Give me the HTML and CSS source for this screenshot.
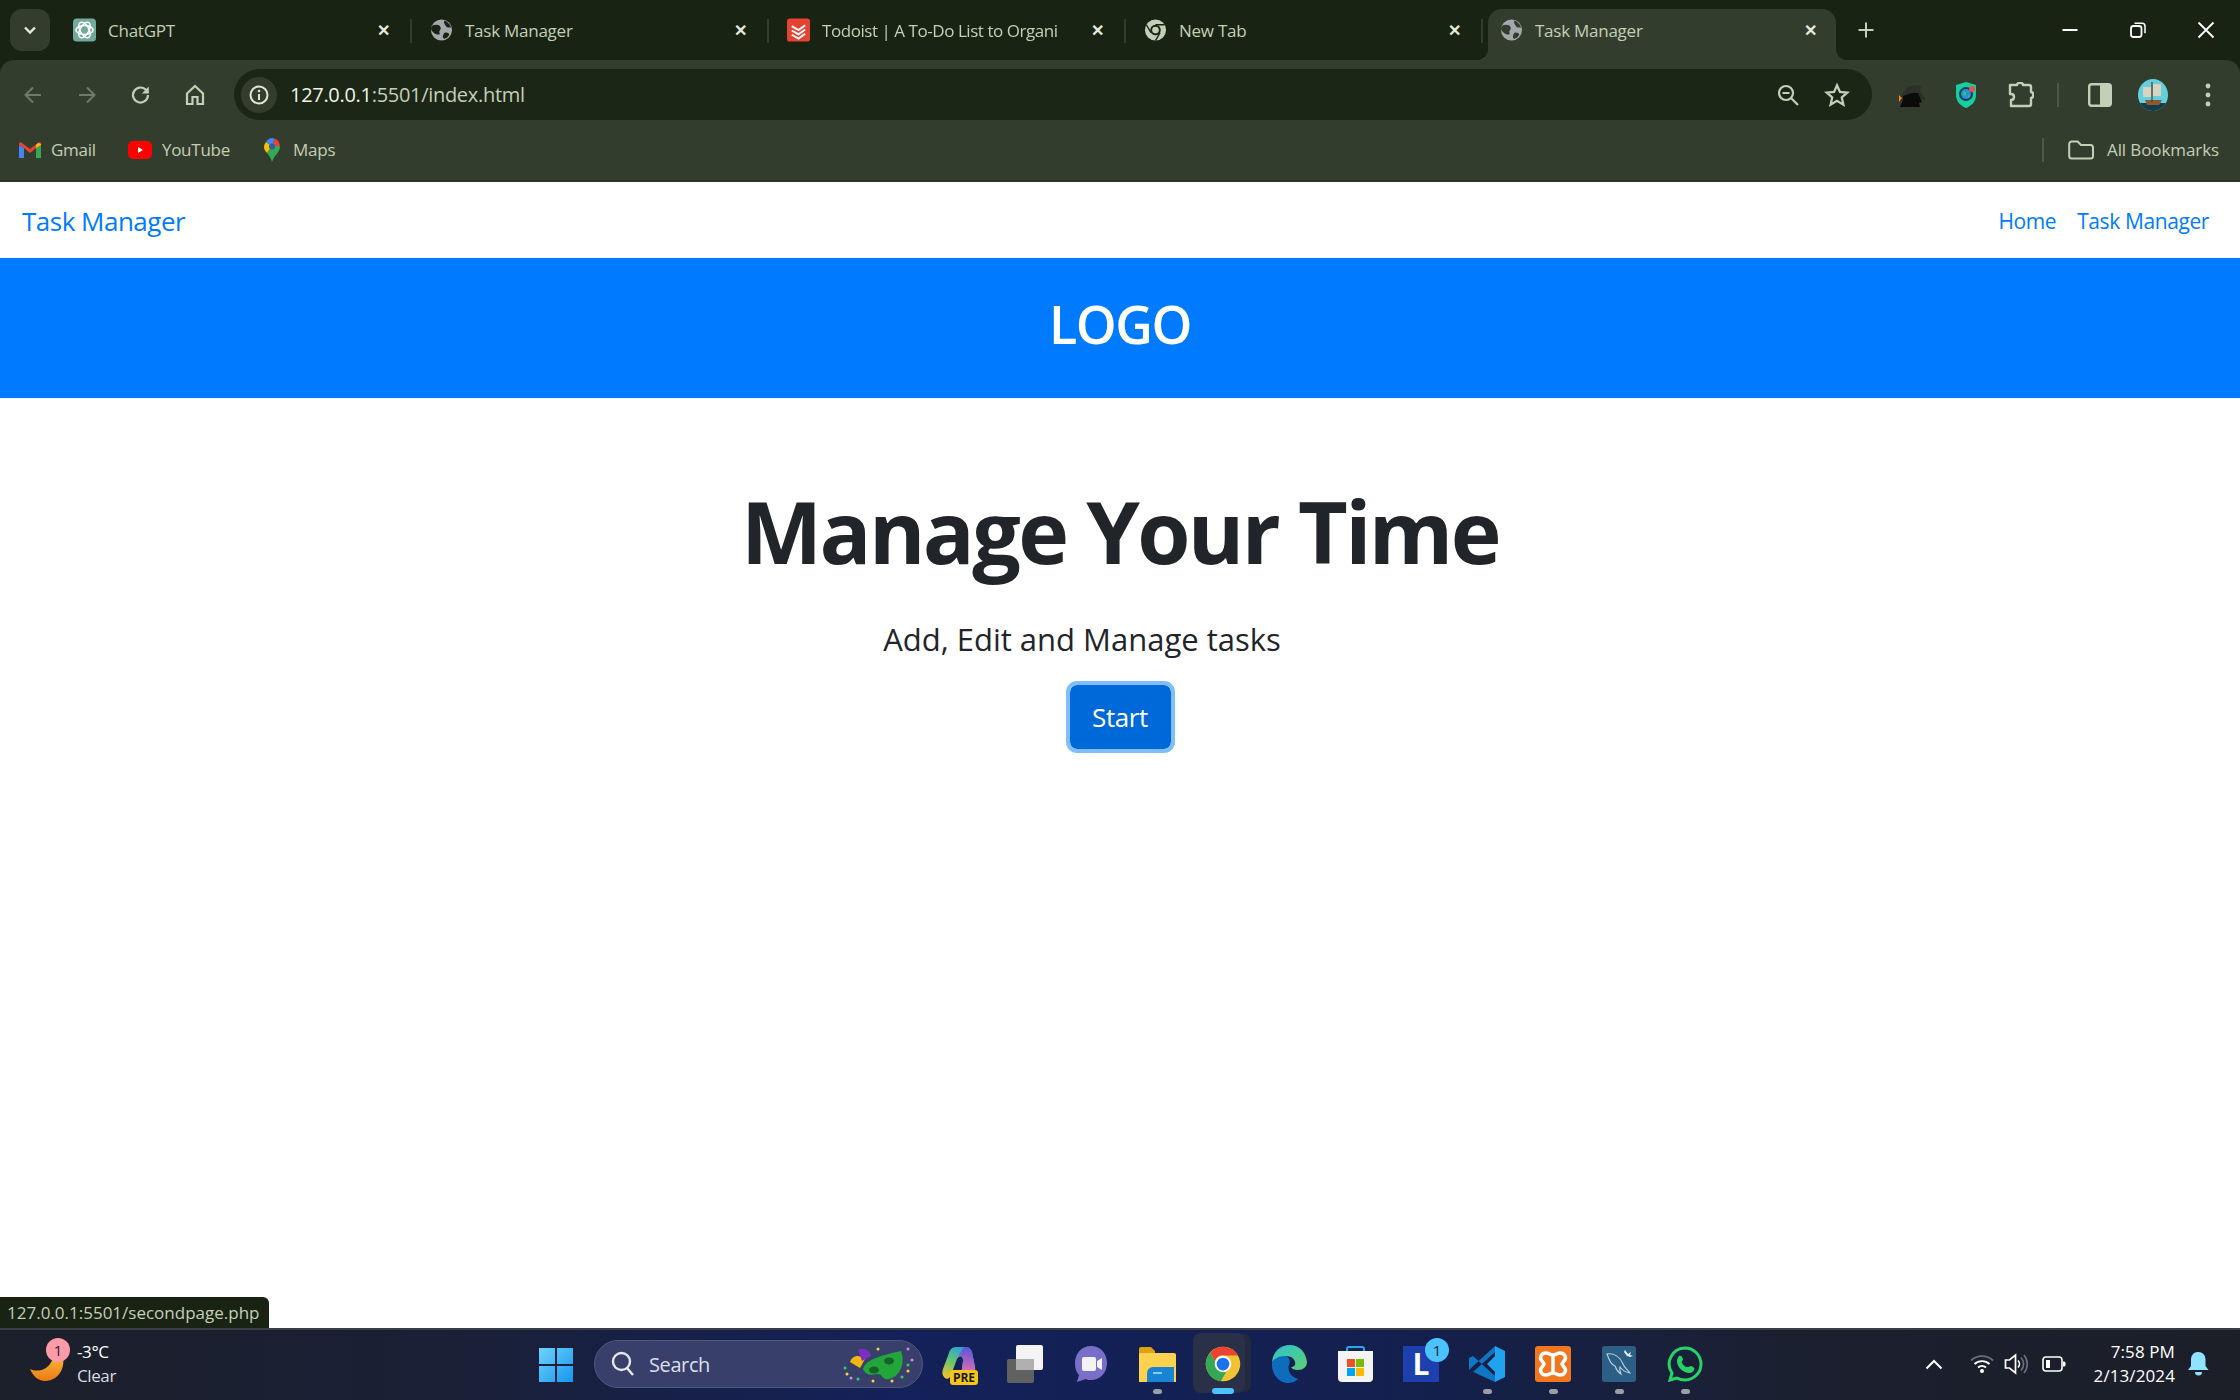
FILE: index.html
```html
<!DOCTYPE html>
<html lang="en">
<head>
    <meta charset="UTF-8">
    <title>Task Manager</title>
    <link rel="stylesheet" href="styles.css">
</head>
<body>
    <div class="browser">
        <div class="tabstrip">
            <div class="tab-search">
                <svg width="16" height="16" viewBox="0 0 16 16"><path d="M3 5.500l5 5 5-5" fill="none" stroke="#e4ead9" stroke-width="2.400"/></svg>
            </div>
            <div class="tab">
                <svg class="favicon" viewBox="0 0 24 24"><rect width="24" height="24" rx="4" fill="#74aa9c"/><g fill="none" stroke="#fff" stroke-width="1.500"><ellipse cx="12" cy="12" rx="9" ry="4.600"/><ellipse cx="12" cy="12" rx="9" ry="4.600" transform="rotate(60 12 12)"/><ellipse cx="12" cy="12" rx="9" ry="4.600" transform="rotate(120 12 12)"/></g></svg>
                <span class="tab-title">ChatGPT</span>
                <span class="tab-close">&#10005;</span>
            </div>
            <div class="tab">
                <svg class="favicon" viewBox="0 0 24 24"><circle cx="12" cy="12" r="11" fill="#a3a8ad"/><path d="M3 7c3-1 7-1 8 2s-2 3-1 6-4 2-7-1-2-5 0-7zM15 2c3 1 6 4 7 7-3 1-5 0-6-2s-2-3-1-5zM15 15c2-1 5 0 5 2-1 2-3 4-5 4s-2-4 0-6z" fill="#192314"/></svg>
                <span class="tab-title">Task Manager</span>
                <span class="tab-close">&#10005;</span>
            </div>
            <div class="tab">
                <svg class="favicon" viewBox="0 0 24 24"><rect width="24" height="24" rx="3" fill="#e44332"/><path d="M5 8l7 4 7-5M5 12.500l7 4 7-5M5 17l7 4 7-5" fill="none" stroke="#fff" stroke-width="2"/></svg>
                <span class="tab-title tab-title-fade">Todoist | A To-Do List to Organi</span>
                <span class="tab-close">&#10005;</span>
            </div>
            <div class="tab">
                <svg class="favicon" viewBox="0 0 24 24"><circle cx="12" cy="12" r="11" fill="#c3cfb6"/><circle cx="12" cy="12" r="5.500" fill="#192314"/><circle cx="12" cy="12" r="3.500" fill="#c3cfb6"/><path d="M12 6.500h9.500M7.200 14.700L2.500 6.500M16.800 14.700L12 23" stroke="#192314" stroke-width="1.400"/></svg>
                <span class="tab-title">New Tab</span>
                <span class="tab-close">&#10005;</span>
            </div>
            <div class="tab tab-active">
                <svg class="favicon" viewBox="0 0 24 24"><circle cx="12" cy="12" r="11" fill="#a3a8ad"/><path d="M3 7c3-1 7-1 8 2s-2 3-1 6-4 2-7-1-2-5 0-7zM15 2c3 1 6 4 7 7-3 1-5 0-6-2s-2-3-1-5zM15 15c2-1 5 0 5 2-1 2-3 4-5 4s-2-4 0-6z" fill="#333d2d"/></svg>
                <span class="tab-title">Task Manager</span>
                <span class="tab-close">&#10005;</span>
            </div>
            <div class="new-tab">
                <svg width="18" height="18" viewBox="0 0 18 18"><path d="M9 1.500v15M1.500 9h15" stroke="#c3cfb6" stroke-width="2"/></svg>
            </div>
            <div class="window-controls">
                <svg width="18" height="18" viewBox="0 0 18 18"><path d="M1.500 9h15" stroke="#fff" stroke-width="2"/></svg>
                <svg width="18" height="18" viewBox="0 0 18 18"><rect x="2" y="5" width="10.500" height="11" rx="2.500" fill="none" stroke="#fff" stroke-width="1.800"/><path d="M5.500 2.200h7.500a3 3 0 0 1 3 3v7" fill="none" stroke="#fff" stroke-width="1.500"/></svg>
                <svg width="18" height="18" viewBox="0 0 18 18"><path d="M1.500 1.500l15 15M16.500 1.500l-15 15" stroke="#fff" stroke-width="1.800"/></svg>
            </div>
        </div>

        <div class="toolbar-area">
            <div class="toolbar">
                <div class="nav-btn">
                    <svg width="22" height="22" viewBox="0 0 22 22"><path d="M19 11H4M11 3.500L3.500 11l7.500 7.500" fill="none" stroke="#6f7a68" stroke-width="2"/></svg>
                </div>
                <div class="nav-btn">
                    <svg width="22" height="22" viewBox="0 0 22 22"><path d="M3 11h15M11 3.500l7.500 7.500-7.500 7.500" fill="none" stroke="#6f7a68" stroke-width="2"/></svg>
                </div>
                <div class="nav-btn">
                    <svg width="22" height="22" viewBox="0 0 22 22"><path d="M18 11a7.500 7.500 0 1 1-2.300-5.400L18 8" fill="none" stroke="#c3cfb6" stroke-width="2.200"/><path d="M18.800 2.500v7h-7z" fill="#c3cfb6"/></svg>
                </div>
                <div class="nav-btn">
                    <svg width="22" height="24" viewBox="0 0 22 24"><path d="M3 10.500L11 3l8 7.500V21h-5.500v-7h-5v7H3z" fill="none" stroke="#c3cfb6" stroke-width="2.200"/></svg>
                </div>
                <div class="omnibox">
                    <div class="site-info">
                        <svg width="22" height="22" viewBox="0 0 22 22"><circle cx="11" cy="11" r="8.500" fill="none" stroke="#dfe6d4" stroke-width="2"/><path d="M11 10v6" stroke="#dfe6d4" stroke-width="2"/><circle cx="11" cy="7" r="1.300" fill="#dfe6d4"/></svg>
                    </div>
                    <span class="url">127.0.0.1<span class="url-rest">:5501/index.html</span></span>
                    <svg class="omni-zoom" width="24" height="24" viewBox="0 0 24 24"><circle cx="10" cy="10" r="7" fill="none" stroke="#c3cfb6" stroke-width="2.200"/><path d="M6.500 10h7M15 15l7 7" stroke="#c3cfb6" stroke-width="2.200"/></svg>
                    <svg class="omni-star" width="26" height="26" viewBox="0 0 24 24"><path d="M12 3l2.700 6.200 6.800.6-5.100 4.500 1.500 6.600L12 17.400 6.100 20.900l1.500-6.600L2.500 9.800l6.800-.6z" fill="none" stroke="#c3cfb6" stroke-width="2.100"/></svg>
                </div>
                <div class="toolbar-right">
                    <div class="tool ext-one">
                        <svg width="30" height="26" viewBox="0 0 30 26"><path d="M1 20l4-9 5-6 6-2 7 1-1 5 3 4 3 6-7-3H8z" fill="#2d2f2a"/><path d="M5 14l9-3 6 0 4 9-3 1 1 4H2l3-7z" fill="#0b0b0b"/><path d="M1 13l3 3-3 4z" fill="#f08a0c"/></svg>
                    </div>
                    <div class="tool ext-two">
                        <svg width="22" height="28" viewBox="0 0 22 28"><path d="M11 1l10 3v10c0 7-5 11-10 13C6 25 1 21 1 14V4z" fill="#15cf9c"/><circle cx="11" cy="13" r="7" fill="#123a5e"/><circle cx="11" cy="13" r="5" fill="#2b8fe0"/><path d="M8 11c2-1 3 0 3 2s-2 2-3 0zM13 14l2 1-2 2z" fill="#2ecf4a"/><circle cx="17" cy="8" r="3" fill="#f05050"/></svg>
                    </div>
                    <div class="tool ext-puzzle">
                        <svg width="26" height="26" viewBox="0 0 26 26"><path d="M2 3h7c0-3 6-3 6 0h6a2 2 0 0 1 2 2v5c3 0 3 6 0 6v6a2 2 0 0 1-2 2H3v-6c4 0 4-6 0-6H2z" fill="none" stroke="#c3cfb6" stroke-width="2.400" stroke-linejoin="round"/></svg>
                    </div>
                    <span class="tool-sep"></span>
                    <div class="tool side-panel">
                        <svg width="24" height="24" viewBox="0 0 24 24"><rect x="1.200" y="1.200" width="21.600" height="21.600" rx="2.500" fill="none" stroke="#c3cfb6" stroke-width="2.400"/><rect x="12" y="1" width="11" height="22" rx="2" fill="#c3cfb6"/></svg>
                    </div>
                    <div class="tool avatar">
                        <svg width="30" height="32" viewBox="0 0 30 32"><defs><clipPath id="avatarClip"><ellipse cx="15" cy="16" rx="15" ry="16"/></clipPath></defs><g clip-path="url(#avatarClip)"><rect width="30" height="32" fill="#63d0de"/><rect y="24" width="30" height="8" fill="#143c4c"/><path d="M7 21h17l-3 5H9z" fill="#8a5a33"/><path d="M5 8h8v10H5zM15 5h8v12h-8z" fill="#d8d2c0"/><path d="M14 3v20" stroke="#5a3a20" stroke-width="1.200"/></g></svg>
                    </div>
                    <div class="tool kebab">
                        <svg width="6" height="24" viewBox="0 0 6 24"><circle cx="3" cy="3" r="2.400" fill="#c3cfb6"/><circle cx="3" cy="12" r="2.400" fill="#c3cfb6"/><circle cx="3" cy="21" r="2.400" fill="#c3cfb6"/></svg>
                    </div>
                </div>
            </div>

            <div class="bookmarks">
                <div class="bookmark bookmark-gmail">
                    <svg width="22" height="16" viewBox="0 0 22 16"><path d="M0 3v13h5V6z" fill="#4285f4"/><path d="M17 6v10h5V3z" fill="#34a853"/><path d="M0 3l5 3 6 5 6-5 5-3V2c0-2-2-2-3-1l-8 6-8-6C2 0 0 0 0 2z" fill="#ea4335"/><path d="M19 1l3 1v1l-5 3V3z" fill="#fbbc04"/></svg>
                    <span>Gmail</span>
                </div>
                <div class="bookmark bookmark-youtube">
                    <svg width="24" height="18" viewBox="0 0 24 18"><rect width="24" height="18" rx="5" fill="#f00"/><path d="M10 6l5 3-5 3z" fill="#fff"/></svg>
                    <span>YouTube</span>
                </div>
                <div class="bookmark bookmark-maps">
                    <svg width="18" height="24" viewBox="0 0 18 24"><path d="M9 24c-1-4-3-6-5-9L12 5l5 4c0 3-2 5-4 8-2 2-3 4-4 7z" fill="#34a853"/><path d="M4 15C2 13 1 11 1 9c0-2 1-4 2-5l6 4z" fill="#fbbc04"/><path d="M3 4c1.500-2.500 4-4 6-4 1 0 2 .2 3 .7L9 8z" fill="#4285f4"/><path d="M12 .700c3 1 5 4.300 5 8.300l-5-2-3 1z" fill="#ea4335"/><circle cx="9" cy="8.500" r="3" fill="#2f5aa8"/></svg>
                    <span>Maps</span>
                </div>
                <div class="all-bookmarks">
                    <span class="bookmarks-sep"></span>
                    <svg width="26" height="20" viewBox="0 0 26 20"><path d="M1.200 4a2.500 2.500 0 0 1 2.500-2.500h6L13 5h9.500a2.500 2.500 0 0 1 2.500 2.500v8.500a2.500 2.500 0 0 1-2.500 2.500H3.700A2.500 2.500 0 0 1 1.200 16z" fill="none" stroke="#c3cfb6" stroke-width="2"/></svg>
                    <span>All Bookmarks</span>
                </div>
            </div>
        </div>
    </div>

    <div class="page">
        <nav class="navbar">
            <a class="brand" href="#">Task Manager</a>
            <div class="nav-links">
                <a href="#">Home</a>
                <a href="#">Task Manager</a>
            </div>
        </nav>
        <header class="logo-bar">LOGO</header>
        <main class="hero">
            <h1>Manage Your Time</h1>
            <p>Add, Edit and Manage tasks</p>
            <button class="start-btn">Start</button>
        </main>
        <div class="status-bubble">127.0.0.1:5501/secondpage.php</div>
    </div>

    <div class="taskbar">
        <div class="weather">
            <div class="weather-icon">
                <svg width="36" height="32" viewBox="0 0 36 32"><defs><linearGradient id="moonGrad" x1="0" y1="0" x2="0" y2="1"><stop offset="0" stop-color="#f7c244"/><stop offset="1" stop-color="#ee7a12"/></linearGradient></defs><path d="M0 19C4 21 10 21 14 19C18 17 21 14 23 8L31 2C34 8 34 14 32 19C29 27 22 31 15 31C8 31 3 26 0 19z" fill="url(#moonGrad)"/></svg>
                <span class="weather-badge">1</span>
            </div>
            <div class="weather-text">
                <span>-3°C</span>
                <span class="weather-sub">Clear</span>
            </div>
        </div>

        <div class="slot">
            <svg width="34" height="35" viewBox="0 0 34 35"><defs><linearGradient id="winGrad" x1="0" y1="0" x2="1" y2="1"><stop offset="0" stop-color="#6fd3fb"/><stop offset="1" stop-color="#1596ee"/></linearGradient></defs><path d="M0 1h16v16H0zM18 1h16v16H18zM0 19h16v16H0zM18 19h16v16H18z" fill="url(#winGrad)"/></svg>
        </div>

        <div class="search-box">
            <svg width="24" height="26" viewBox="0 0 24 26"><circle cx="10.500" cy="10.500" r="8.500" fill="none" stroke="#e6e8ef" stroke-width="2.400"/><path d="M16 17l6 7" stroke="#e6e8ef" stroke-width="2.400"/></svg>
            <span class="search-label">Search</span>
            <svg class="search-mask" width="72" height="40" viewBox="0 0 72 40"><path d="M8 18c2-7 10-8 15-3l-5 9z" fill="#f5b70f"/><path d="M16 6c5-3 11-1 13 6l-9 5z" fill="#7b2fc0"/><g transform="translate(5 0)"><path d="M16 25c3-9 15-13 38-18 4 10 1 25-12 28-6 2-7-6-12-5-5 1-11 2-14-5z" fill="#22a63a"/><ellipse cx="42" cy="17" rx="5" ry="3.500" fill="#16602a"/><ellipse cx="27" cy="26" rx="5" ry="3.500" fill="#16602a"/></g><g fill="#c98de8"><circle cx="66" cy="5" r="1.500"/><circle cx="70" cy="16" r="1.500"/><circle cx="9" cy="34" r="1.500"/></g><g fill="#f5d33a"><circle cx="36" cy="5" r="1.500"/><circle cx="5" cy="30" r="1.500"/><circle cx="50" cy="37" r="1.500"/><circle cx="66" cy="27" r="1.500"/><circle cx="31" cy="37" r="1.500"/></g><g fill="#35d05a"><circle cx="3" cy="24" r="1.500"/><circle cx="66" cy="21" r="1.500"/><circle cx="16" cy="35" r="1.500"/><circle cx="60" cy="33" r="1.500"/></g></svg>
        </div>

        <div class="slots">
            <div class="slot">
                <svg width="34" height="34" viewBox="0 0 34 34"><defs><linearGradient id="copilotLeft" x1="0.700" y1="0" x2="0.200" y2="1"><stop offset="0" stop-color="#1f9fe8"/><stop offset=".55" stop-color="#6cc66a"/><stop offset="1" stop-color="#f2c230"/></linearGradient><linearGradient id="copilotRight" x1="0.500" y1="0" x2="0.500" y2="1"><stop offset="0" stop-color="#5a55d8"/><stop offset="1" stop-color="#ee6fb0"/></linearGradient></defs><path d="M24 0c3 0 5 2 6 5l3 15c1 6-3 9-7 9h-7l2-15c.5-5-4-6-6-2L9 28c-1 4-5 5-7 2-2-2-2-5-1-8L7 6c1-4 4-6 7-6z" fill="url(#copilotLeft)"/><path d="M24 0c3 0 5 2 6 5l3 15c1 6-3 9-7 9h-7l2-15c.5-4-2-6-5-5 3-3 4-9 8-9z" fill="url(#copilotRight)"/></svg>
                <span class="pre-badge">PRE</span>
            </div>
            <div class="slot">
                <svg width="36" height="38" viewBox="0 0 36 38"><rect x="0" y="14" width="27" height="24" rx="2" fill="#616161"/><rect x="9" y="0" width="27" height="25" rx="2" fill="#f4f4f4"/><rect x="9" y="14" width="18" height="11" fill="#b0b0b0"/></svg>
            </div>
            <div class="slot">
                <svg width="34" height="36" viewBox="0 0 34 36"><path d="M17 0c9 0 16 7 16 17s-7 17-16 17c-2 0-4 0-5-1l-9 3 2-7C2 26 1 22 1 17 1 7 8 0 17 0z" fill="#7a6fc8"/><rect x="8" y="11" width="14" height="14" rx="2" fill="#f2f2fa"/><path d="M23 15l5-3v12l-5-3z" fill="#f2f2fa"/></svg>
            </div>
            <div class="slot">
                <svg width="37" height="35" viewBox="0 0 37 35"><path d="M0 2a2 2 0 0 1 2-2h10l4 4v6H0z" fill="#e0a211"/><path d="M0 6h35a2 2 0 0 1 2 2v27H0z" fill="#fcd24f"/><path d="M14 20h21v15H8V26a6 6 0 0 1 6-6z" fill="#1a84d4"/><path d="M14 26h9" stroke="#7fd0f7" stroke-width="2"/></svg>
                <span class="task-dot"></span>
            </div>
            <div class="slot slot-active">
                <svg width="36" height="36" viewBox="0 0 48 48"><circle cx="24" cy="24" r="23" fill="#f1c232"/><path d="M24 1a23 23 0 0 1 20 11.500H24a11.500 11.500 0 0 0-10.800 7.500L7 9A23 23 0 0 1 24 1z" fill="#ea4335"/><path d="M7 9l10 17.500A11.500 11.500 0 0 0 28 35L21 47A23 23 0 0 1 7 9z" fill="#34a853"/><circle cx="24" cy="24" r="11" fill="#fff"/><circle cx="24" cy="24" r="8.500" fill="#1a73e8"/></svg>
                <span class="task-bar"></span>
            </div>
            <div class="slot">
                <svg width="36" height="38" viewBox="0 0 36 38"><defs><linearGradient id="edgeGrad" x1="0" y1="0" x2="1" y2="1"><stop offset="0" stop-color="#2bc3d2"/><stop offset="1" stop-color="#5ecf6e"/></linearGradient></defs><path d="M1 17C2 7 9 0 19 0c9 0 16 7 17 17 0 5-4 8-9 8-4 0-6-1-7-3 3 0 5-2 4-5-1-5-7-7-12-5-5 1-9 3-11 5z" fill="url(#edgeGrad)"/><path d="M1 17c2-3 7-6 12-6s7 4 5 9c-2 6 2 12 9 14-3 3-7 4-10 4C8 38 0 29 1 17z" fill="#0f6cbd"/></svg>
            </div>
            <div class="slot">
                <svg width="35" height="36" viewBox="0 0 35 36"><path d="M9 6V3a2 2 0 0 1 2-2h13a2 2 0 0 1 2 2v3" fill="none" stroke="#28a8e8" stroke-width="2"/><path d="M0 5h35v27a4 4 0 0 1-4 4H4a4 4 0 0 1-4-4z" fill="#f4f4f4"/><rect x="9" y="13" width="8" height="8" fill="#f25022"/><rect x="18" y="13" width="8" height="8" fill="#7fba00"/><rect x="9" y="22" width="8" height="8" fill="#00a4ef"/><rect x="18" y="22" width="8" height="8" fill="#ffb900"/></svg>
            </div>
            <div class="slot">
                <span class="app-l">L</span>
                <span class="app-badge">1</span>
            </div>
            <div class="slot">
                <svg width="36" height="36" viewBox="0 0 36 36"><path d="M0 12l4-2 22 20v6L0 24zM0 24l4 2L26 6V0z" fill="#0e76c4"/><path d="M26 0l10 5v26l-10 5z M26 10l-8 8 8 8z" fill="#21a2ee" fill-rule="evenodd"/></svg>
                <span class="task-dot"></span>
            </div>
            <div class="slot">
                <svg width="36" height="36" viewBox="0 0 36 36"><rect width="36" height="36" rx="3" fill="#f0761f"/><path d="M11 7C14 7 15 9 18 9C21 9 22 7 25 7C30 7 32 12 29 15C28 16.500 27 17 27 18C27 19 28 19.500 29 21C32 24 30 29 25 29C22 29 21 27 18 27C15 27 14 29 11 29C6 29 4 24 7 21C8 19.500 9 19 9 18C9 17 8 16.500 7 15C4 12 6 7 11 7zM18 9V27" fill="none" stroke="#fff" stroke-width="3.500"/></svg>
                <span class="task-dot"></span>
            </div>
            <div class="slot">
                <svg width="34" height="36" viewBox="0 0 34 36"><rect width="34" height="36" rx="3" fill="#2c5f86"/><path d="M5 8c7-1 13 3 16 10 1 3 4 5 7 9-5-1-8-3-10-6-1 3 0 5 1 7-3-2-5-5-6-8-3-1-6-6-8-12z" fill="none" stroke="#bcd2e0" stroke-width="1.100"/><path d="M23 4l3 4 3-2-1 3 3 1-3 1-3-1-3-4z" fill="#e4edf3"/></svg>
                <span class="task-dot"></span>
            </div>
            <div class="slot">
                <svg width="36" height="36" viewBox="0 0 36 36"><path d="M18 2a16 16 0 0 1 0 32c-3 0-6-.8-8-2l-7 2 2-7a16 16 0 0 1 13-25z" fill="none" stroke="#25d366" stroke-width="3"/><path d="M12 10c2-1 3 0 4 3 0 2-2 2-1 4 1 2 3 4 5 4 2 1 2-1 4-1 3 1 4 2 3 4-1 3-5 4-9 2-5-2-8-7-8-11 0-2 1-4 2-5z" fill="#25d366"/></svg>
                <span class="task-dot"></span>
            </div>
        </div>

        <div class="tray">
            <div class="tray-chevron">
                <svg width="18" height="11" viewBox="0 0 18 11"><path d="M1.500 9.500L9 2l7.500 7.500" fill="none" stroke="#fff" stroke-width="2"/></svg>
            </div>
            <div class="tray-item">
                <svg width="24" height="20" viewBox="0 0 24 20"><path d="M1 6.500a16 16 0 0 1 22 0" fill="none" stroke="#6b7078" stroke-width="1.800"/><path d="M4.500 10a11 11 0 0 1 15 0M8 13.500a6 6 0 0 1 8 0" fill="none" stroke="#fff" stroke-width="1.800"/><circle cx="12" cy="17" r="2" fill="#fff"/></svg>
            </div>
            <div class="tray-item">
                <svg width="24" height="24" viewBox="0 0 24 24"><path d="M1.500 8h4l6-5v18l-6-5h-4z" fill="none" stroke="#fff" stroke-width="1.700"/><path d="M14 8.500a5 5 0 0 1 0 7" fill="none" stroke="#fff" stroke-width="1.700"/><path d="M17 5.500a9.500 9.500 0 0 1 0 13M20 3a14 14 0 0 1 0 18" fill="none" stroke="#6b7078" stroke-width="1.700"/></svg>
            </div>
            <div class="tray-item tray-battery">
                <svg width="24" height="16" viewBox="0 0 24 16"><rect x="1" y="1" width="19" height="14" rx="3" fill="none" stroke="#fff" stroke-width="1.600"/><rect x="4" y="4" width="4" height="8" fill="#fff"/><path d="M21 5.500h1a1.500 1.500 0 0 1 1.500 1.500v2a1.500 1.500 0 0 1-1.500 1.500h-1z" fill="#fff"/></svg>
            </div>
            <div class="clock">
                <span>7:58 PM</span>
                <span>2/13/2024</span>
            </div>
            <div class="tray-bell">
                <svg width="21" height="24" viewBox="0 0 21 24"><path d="M10.500 0a7 7 0 0 1 7 7v7l3 4H0l3-4V7a7 7 0 0 1 7.500-7z" fill="#8fe3ff"/><path d="M7 20h7a3.500 3.500 0 0 1-7 0z" fill="#8fe3ff"/></svg>
            </div>
        </div>
    </div>
</body>
</html>
```

FILE: styles.css
```css
* {
    box-sizing: border-box;
}

html, body {
    margin: 0;
    height: 100%;
}

body {
    display: flex;
    flex-direction: column;
    height: 1400px;
    overflow: hidden;
    font-family: "Open Sans", "Noto Sans", sans-serif;
    background-color: #fff;
}

/* browser chrome */
.browser {
    background-color: #192314;
    border-bottom: 2px solid #2b3426;
}

.tabstrip {
    display: flex;
    height: 60px;
    padding-top: 9px;
    padding-left: 10px;
}

.tab-search {
    display: flex;
    align-items: center;
    justify-content: center;
    width: 40px;
    height: 42px;
    margin-right: 8px;
    border-radius: 12px;
    background-color: #333d2d;
}

.tab {
    position: relative;
    display: flex;
    align-items: center;
    flex: 0 0 357px;
    min-width: 0;
    height: 42px;
    padding-left: 15px;
    padding-right: 24px;
    color: #c3cfb6;
    font-size: 17px;
    letter-spacing: -0.25px;
}

.tab::after {
    content: "";
    position: absolute;
    right: 3px;
    top: 10px;
    width: 2px;
    height: 24px;
    background-color: #333d2d;
}

.favicon {
    flex: none;
    width: 23px;
    height: 24px;
    margin-right: 12px;
}

.tab-title {
    flex: 1;
    min-width: 0;
    white-space: nowrap;
}

.tab-title-fade {
    -webkit-mask-image: linear-gradient(to right, #000 93%, transparent);
    mask-image: linear-gradient(to right, #000 93%, transparent);
    letter-spacing: -0.45px;
}

.tab-close {
    flex: none;
    width: 16px;
    font-size: 16px;
    font-weight: 700;
    color: #e4ead9;
    text-align: center;
}

.tab-active {
    flex-basis: 348px;
    height: 51px;
    margin-left: 2px;
    padding-bottom: 9px;
    padding-left: 12px;
    padding-right: 18px;
    background-color: #333d2d;
    border-radius: 14px 14px 0 0;
}

.tab-active::after {
    right: -12px;
    top: auto;
    bottom: 0;
    width: 12px;
    height: 12px;
    background: radial-gradient(circle at 100% 0, #192314 12px, #333d2d 12.5px);
}

.tab-active::before {
    content: "";
    position: absolute;
    left: -12px;
    bottom: 0;
    width: 12px;
    height: 12px;
    background: radial-gradient(circle at 0 0, #192314 12px, #333d2d 12.5px);
}

.new-tab {
    display: flex;
    align-items: center;
    justify-content: center;
    width: 36px;
    height: 42px;
    margin-left: 12px;
}

.window-controls {
    display: flex;
    align-items: center;
    gap: 50px;
    height: 42px;
    margin-left: auto;
    padding-right: 25px;
}

.toolbar-area {
    height: 120px;
    background-color: #333d2d;
    border-radius: 14px 14px 0 0;
}

.toolbar {
    display: flex;
    align-items: flex-end;
    height: 60px;
    padding-left: 6px;
}

.nav-btn {
    display: flex;
    align-items: center;
    justify-content: center;
    width: 54px;
    height: 51px;
}

.omnibox {
    display: flex;
    align-items: center;
    width: 1638px;
    height: 51px;
    margin-left: 12px;
    padding-left: 7px;
    border-radius: 26px;
    background-color: #1c2617;
}

.site-info {
    display: flex;
    align-items: center;
    justify-content: center;
    width: 36px;
    height: 36px;
    margin-right: 13px;
    border-radius: 50%;
    background-color: #333d2d;
}

.url {
    flex: 1;
    color: #f0f4e8;
    font-size: 20px;
    letter-spacing: -0.3px;
}

.url-rest {
    color: #c3cfb6;
}

.omni-zoom {
    margin-right: 24px;
}

.omni-star {
    margin-right: 22px;
}

.toolbar-right {
    display: flex;
    align-items: center;
    height: 51px;
}

.tool {
    display: flex;
    align-items: center;
    justify-content: center;
}

.ext-one {
    width: 30px;
    margin-left: 26px;
}

.ext-two {
    width: 22px;
    margin-left: 27px;
}

.ext-puzzle {
    width: 26px;
    margin-left: 31px;
}

.tool-sep {
    width: 2px;
    height: 24px;
    margin-left: 23px;
    background-color: #4d5846;
}

.side-panel {
    width: 24px;
    margin-left: 29px;
}

.avatar {
    width: 30px;
    margin-left: 26px;
}

.kebab {
    width: 6px;
    margin-left: 37px;
}

.bookmarks {
    display: flex;
    align-items: center;
    height: 60px;
    padding-left: 19px;
    padding-bottom: 1px;
    color: #c3cfb6;
    font-size: 17px;
    letter-spacing: -0.25px;
}

.bookmark {
    display: flex;
    align-items: center;
    gap: 10px;
}

.bookmark-youtube {
    margin-left: 32px;
}

.bookmark-maps {
    margin-left: 33px;
    gap: 12px;
}

.all-bookmarks {
    display: flex;
    align-items: center;
    margin-left: auto;
    padding-right: 21px;
    letter-spacing: -0.1px;
}

.all-bookmarks svg {
    margin-right: 13px;
}

.bookmarks-sep {
    width: 2px;
    height: 24px;
    margin-right: 24px;
    background-color: #4d5846;
}

/* the page itself */
.page {
    position: relative;
    flex: 1;
    display: flex;
    flex-direction: column;
    background-color: #fff;
}

.navbar {
    display: flex;
    align-items: center;
    justify-content: space-between;
    height: 76px;
    padding: 1px 31px 0 22px;
}

.navbar a {
    color: #007bff;
    text-decoration: none;
}

.brand {
    font-size: 26px;
    letter-spacing: -0.5px;
}

.nav-links {
    display: flex;
    gap: 21px;
    font-size: 21px;
    letter-spacing: -0.4px;
}

.logo-bar {
    height: 140px;
    background-color: #007bff;
    color: #fff;
    font-size: 52px;
    font-weight: 600;
    line-height: 132px;
    text-align: center;
    letter-spacing: -1.5px;
}

.hero {
    display: flex;
    flex-direction: column;
    align-items: center;
    padding-top: 81px;
}

.hero h1 {
    margin: 0 0 34px;
    color: #212529;
    font-size: 86px;
    font-weight: 700;
    line-height: 1.2;
    letter-spacing: -2.6px;
}

.hero p {
    margin: 0 76px 22px 0;
    color: #212529;
    font-size: 31px;
    line-height: 1.5;
}

.start-btn {
    width: 101px;
    height: 64px;
    padding: 0;
    border: none;
    border-radius: 7px;
    outline: 4px solid #80bdff;
    background-color: #0069d9;
    color: #fff;
    font-family: inherit;
    font-size: 26px;
    letter-spacing: -0.4px;
}

.status-bubble {
    position: absolute;
    left: 0;
    bottom: 0;
    width: 269px;
    height: 31px;
    padding-left: 7px;
    border-top-right-radius: 6px;
    background-color: #192314;
    color: #c3cfb6;
    font-size: 17px;
    line-height: 31px;
    white-space: nowrap;
}

/* windows taskbar */
.taskbar {
    display: flex;
    align-items: center;
    flex: none;
    height: 72px;
    padding-bottom: 2px;
    border-top: 2px solid #3a3d45;
    background: linear-gradient(to right, #1c202b 0, #1a2036 20%, #14215a 40%, #13204f 62%, #1b2030 80%, #1c1f28 100%);
    color: #fff;
}

.weather {
    display: flex;
    flex: 0 0 523px;
    padding-left: 30px;
}

.weather-icon {
    position: relative;
    width: 36px;
    height: 44px;
    padding-top: 10px;
}

.weather-badge {
    position: absolute;
    left: 16px;
    top: -2px;
    width: 24px;
    height: 24px;
    border-radius: 50%;
    background-color: #ff9aa8;
    color: #1c202b;
    font-size: 15px;
    line-height: 24px;
    text-align: center;
}

.weather-text {
    display: flex;
    flex-direction: column;
    margin-left: 11px;
    font-size: 17px;
    line-height: 24px;
    letter-spacing: -0.4px;
}

.weather-sub {
    color: #d8dbe2;
}

.slot {
    position: relative;
    display: flex;
    align-items: center;
    justify-content: center;
    flex: 0 0 66px;
    height: 70px;
}

.slots {
    display: flex;
    margin-left: 3px;
}

.search-box {
    display: flex;
    align-items: center;
    flex: 0 0 329px;
    height: 48px;
    margin-left: 5px;
    padding: 0 8px 0 16px;
    border: 1px solid #50587e;
    border-radius: 24px;
    background-color: #383f6b;
}

.search-label {
    flex: 1;
    margin-left: 14px;
    color: #dcdfea;
    font-size: 20px;
    letter-spacing: -0.4px;
}

.pre-badge {
    position: absolute;
    left: 24px;
    top: 41px;
    width: 28px;
    height: 15px;
    border-radius: 3px;
    background-color: #f5c518;
    color: #1a1a1a;
    font-size: 12px;
    font-weight: 700;
    line-height: 15px;
    text-align: center;
}

.app-l {
    width: 36px;
    height: 36px;
    background-color: #1e3fae;
    color: #fff;
    font-size: 30px;
    font-weight: 700;
    line-height: 36px;
    text-align: center;
}

.app-badge {
    position: absolute;
    left: 37px;
    top: 9px;
    width: 24px;
    height: 24px;
    border-radius: 50%;
    background-color: #4cc2ff;
    color: #14203c;
    font-size: 15px;
    line-height: 24px;
    text-align: center;
}

.task-dot {
    position: absolute;
    left: 29px;
    bottom: 5px;
    width: 9px;
    height: 5px;
    border-radius: 3px;
    background-color: #9a9ea8;
}

.slot-active::before {
    content: "";
    position: absolute;
    left: 3px;
    top: 4px;
    width: 52px;
    height: 60px;
    border-radius: 8px;
    background-color: #2a3048;
    box-shadow: 7px 0 0 -1px #23293f;
}

.slot-active svg {
    position: relative;
}

.task-bar {
    position: absolute;
    left: 22px;
    bottom: 5px;
    width: 22px;
    height: 6px;
    border-radius: 3px;
    background-color: #4cc2ff;
}

.tray {
    display: flex;
    align-items: center;
    margin-left: auto;
    padding-right: 18px;
}

.tray-chevron {
    display: flex;
    justify-content: center;
    width: 48px;
    margin-right: 7px;
}

.tray-item {
    display: flex;
    justify-content: center;
    width: 34px;
}

.tray-battery {
    width: 42px;
}

.clock {
    display: flex;
    flex-direction: column;
    align-items: flex-end;
    width: 100px;
    font-size: 17px;
    line-height: 24px;
    letter-spacing: 0.1px;
}

.tray-bell {
    display: flex;
    justify-content: center;
    width: 47px;
}
```
